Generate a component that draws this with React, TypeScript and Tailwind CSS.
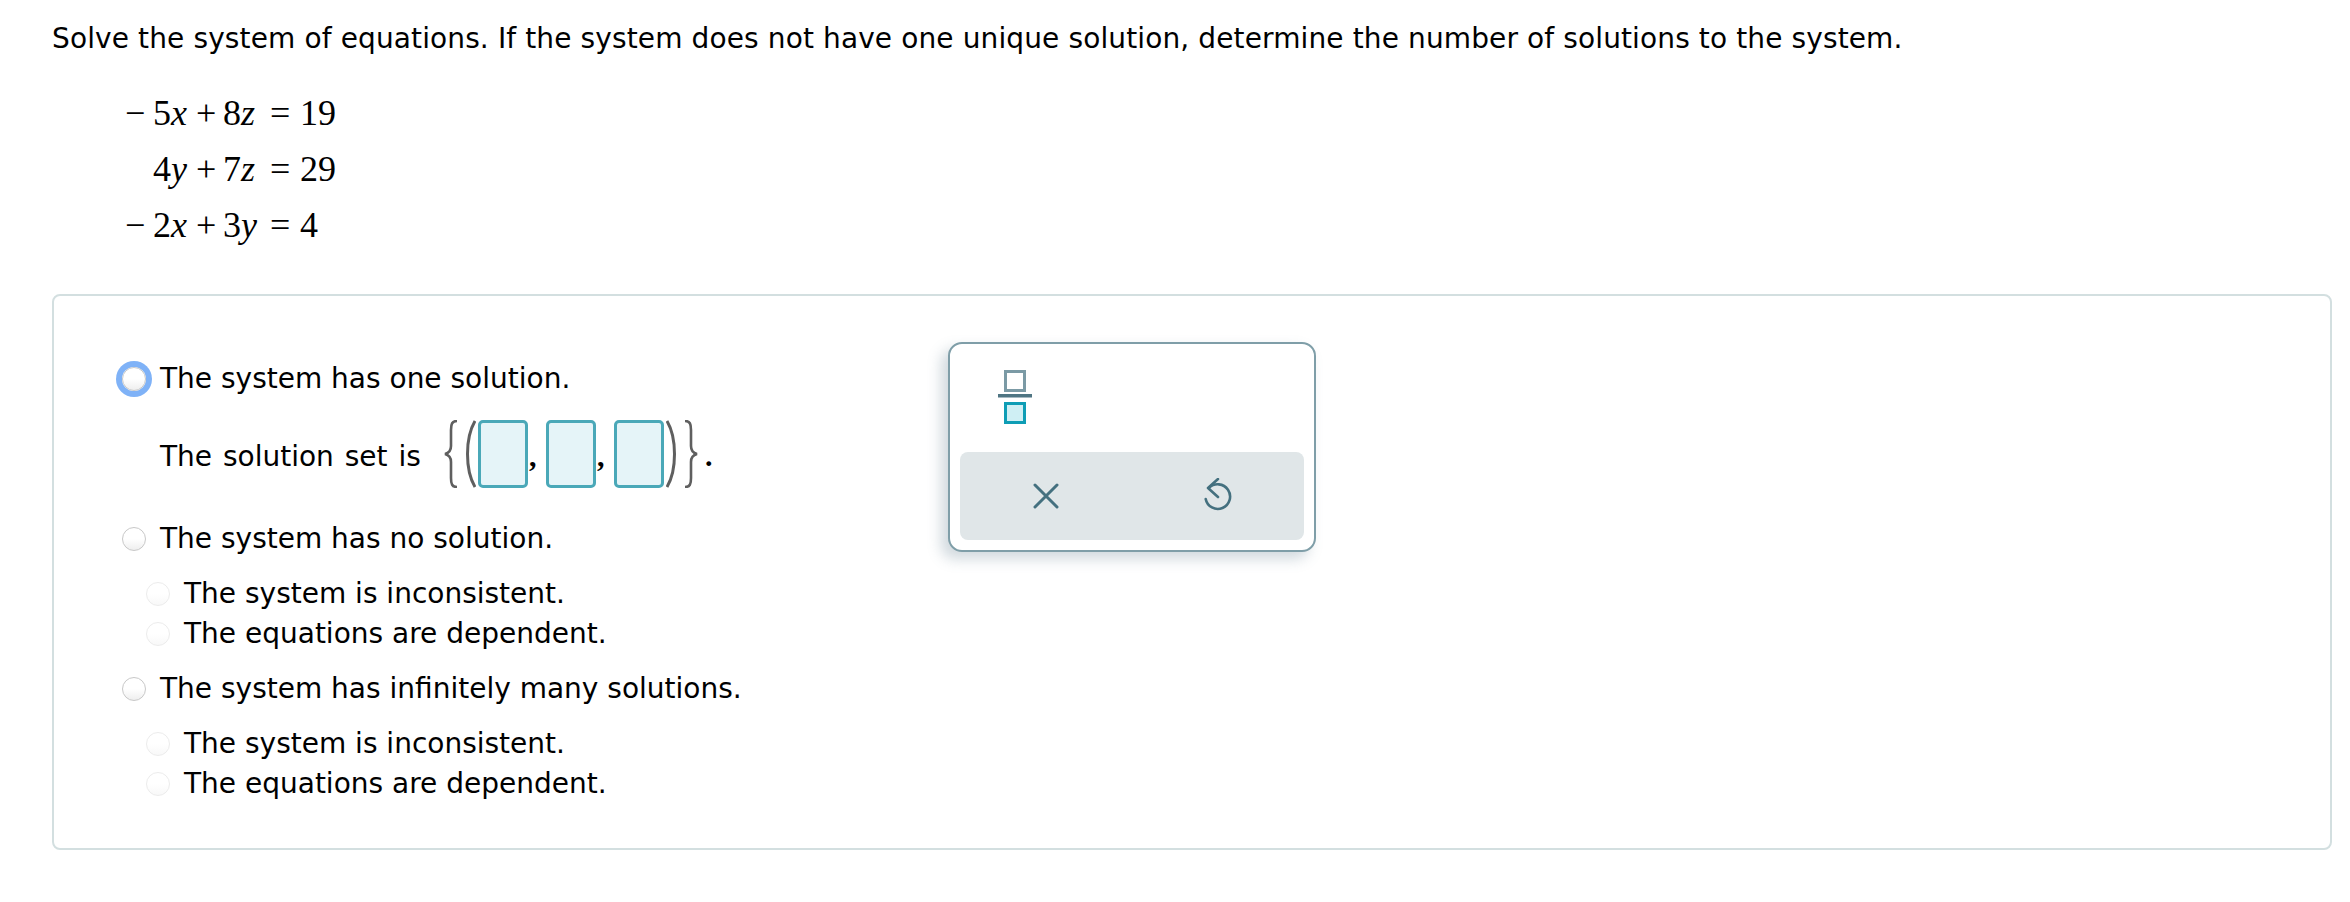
import React from "react";

const equations = [
  { minus: "−", a: <>5<i>x</i></>, op: "+", b: <>8<i>z</i></>, rhs: "19" },
  { minus: "", a: <>4<i>y</i></>, op: "+", b: <>7<i>z</i></>, rhs: "29" },
  { minus: "−", a: <>2<i>x</i></>, op: "+", b: <>3<i>y</i></>, rhs: "4" },
];

function Radio({ focused, faint }: { focused?: boolean; faint?: boolean }) {
  return (
    <span
      className={
        "block w-6 h-6 shrink-0 rounded-full border bg-gradient-to-b from-white via-white " +
        (faint ? "to-[#f8f8f8] border-[#ececec]" : "to-[#eeeeee] border-[#c8c8c8]") +
        (focused ? " ring-[6px] ring-[#7fb2f7]" : "")
      }
    />
  );
}

function Option({ label, className }: { label: string; className?: string }) {
  return (
    <div className={"flex items-center h-10 ml-[68px] gap-[14px] " + (className || "")}>
      <Radio />
      <span>{label}</span>
    </div>
  );
}

function SubOption({ label, className }: { label: string; className?: string }) {
  return (
    <div className={"flex items-center h-10 ml-[92px] gap-[14px] " + (className || "")}>
      <Radio faint />
      <span>{label}</span>
    </div>
  );
}

function Brace({ flip }: { flip?: boolean }) {
  return (
    <svg width="14" height="68" viewBox="0 0 14 68" fill="none" stroke="#5f5f5f" strokeWidth="2.6" className={flip ? "-scale-x-100" : ""}>
      <path d="M13 1C8 1 7 4 7 10V26C7 31 5 33 1 34C5 35 7 37 7 42V58C7 64 8 67 13 67" />
    </svg>
  );
}

function Paren({ flip }: { flip?: boolean }) {
  return (
    <svg width="14" height="68" viewBox="0 0 14 68" fill="none" stroke="#5f5f5f" strokeWidth="3" className={flip ? "-scale-x-100" : ""}>
      <path d="M13 1C3 18 3 50 13 67" />
    </svg>
  );
}

function AnswerBox() {
  return <span className="block w-[50px] h-[68px] rounded-[5px] border-[3px] border-[#4aa8b8] bg-[#e5f4f8]" />;
}

function Comma() {
  return <span className="w-[18px] self-end h-[45px] pl-[1px] font-['Liberation_Serif',serif] font-bold text-[30px] leading-[26px]">,</span>;
}

export default function App() {
  return (
    <div className="min-h-[902px] bg-white text-black pl-[52px] pr-[18px] pt-[19px] font-['DejaVu_Sans',Verdana,sans-serif] text-[28px] leading-10">
      <p className="tracking-[0.12px]">Solve the system of equations. If the system does not have one unique solution, determine the number of solutions to the system.</p>

      <div className="mt-[26px] ml-[73px] font-['Liberation_Serif',serif] text-[36px] leading-[56px] grid grid-cols-[28px_43px_27px_47px_30px_auto] justify-start">
        {equations.map((eq, i) => (
          <React.Fragment key={i}>
            <span>{eq.minus}</span>
            <span>{eq.a}</span>
            <span>{eq.op}</span>
            <span>{eq.b}</span>
            <span>=</span>
            <span>{eq.rhs}</span>
          </React.Fragment>
        ))}
      </div>

      <div className="relative mt-[41px] h-[556px] rounded-lg border-2 border-[#d3dfe0] pt-[63px]">
        <div className="flex items-center h-10 ml-[68px] gap-[14px]">
          <Radio focused />
          <span>The system has one solution.</span>
        </div>

        <div className="flex items-center h-[68px] mt-[21px] ml-[106px]">
          <span className="w-[284px] pt-[6px] [word-spacing:2px]">The solution set is</span>
          <Brace />
          <span className="w-1" />
          <Paren />
          <span className="w-[2px]" />
          <AnswerBox />
          <Comma />
          <AnswerBox />
          <Comma />
          <AnswerBox />
          <span className="w-[2px]" />
          <Paren flip />
          <span className="w-1" />
          <Brace flip />
          <span className="self-end h-[45px] ml-[7px] font-['Liberation_Serif',serif] font-bold text-[30px] leading-[26px]">.</span>
        </div>

        <Option label="The system has no solution." className="mt-[31px]" />
        <SubOption label="The system is inconsistent." className="mt-[15px]" />
        <SubOption label="The equations are dependent." />
        <Option label="The system has infinitely many solutions." className="mt-[15px]" />
        <SubOption label="The system is inconsistent." className="mt-[15px]" />
        <SubOption label="The equations are dependent." />

        {/* math palette */}
        <div className="absolute left-[894px] top-[46px] w-[368px] h-[210px] flex flex-col p-[10px] bg-white rounded-[14px] border-2 border-[#7f9ea8] shadow-[-7px_7px_14px_rgba(90,120,135,0.28)]">
          <svg width="34" height="54" viewBox="0 0 34 54" className="ml-[38px] mt-[16px]">
            <rect x="7.5" y="1.5" width="19" height="19" fill="#fff" stroke="#7b9aa5" strokeWidth="3" />
            <rect x="0" y="24" width="34" height="3.5" fill="#4f7583" />
            <rect x="7.5" y="33.5" width="19" height="19" fill="#cfeff4" stroke="#0e9db5" strokeWidth="3" />
          </svg>
          <div className="mt-auto h-[88px] grid grid-cols-2 place-items-center rounded-lg bg-[#e0e6e8]">
            <svg width="26" height="26" viewBox="0 0 26 26" fill="none" stroke="#44707f" strokeWidth="3" strokeLinecap="round">
              <path d="M2 2L24 24M24 2L2 24" />
            </svg>
            <svg width="30" height="36" viewBox="0 0 30 36" fill="none" stroke="#44707f" strokeWidth="2.6" strokeLinecap="round" strokeLinejoin="round">
              <path d="M15 1L5 10L15 19" />
              <path d="M6 10A12.3 12.3 0 1 1 2.7 21" />
            </svg>
          </div>
        </div>
      </div>
    </div>
  );
}
